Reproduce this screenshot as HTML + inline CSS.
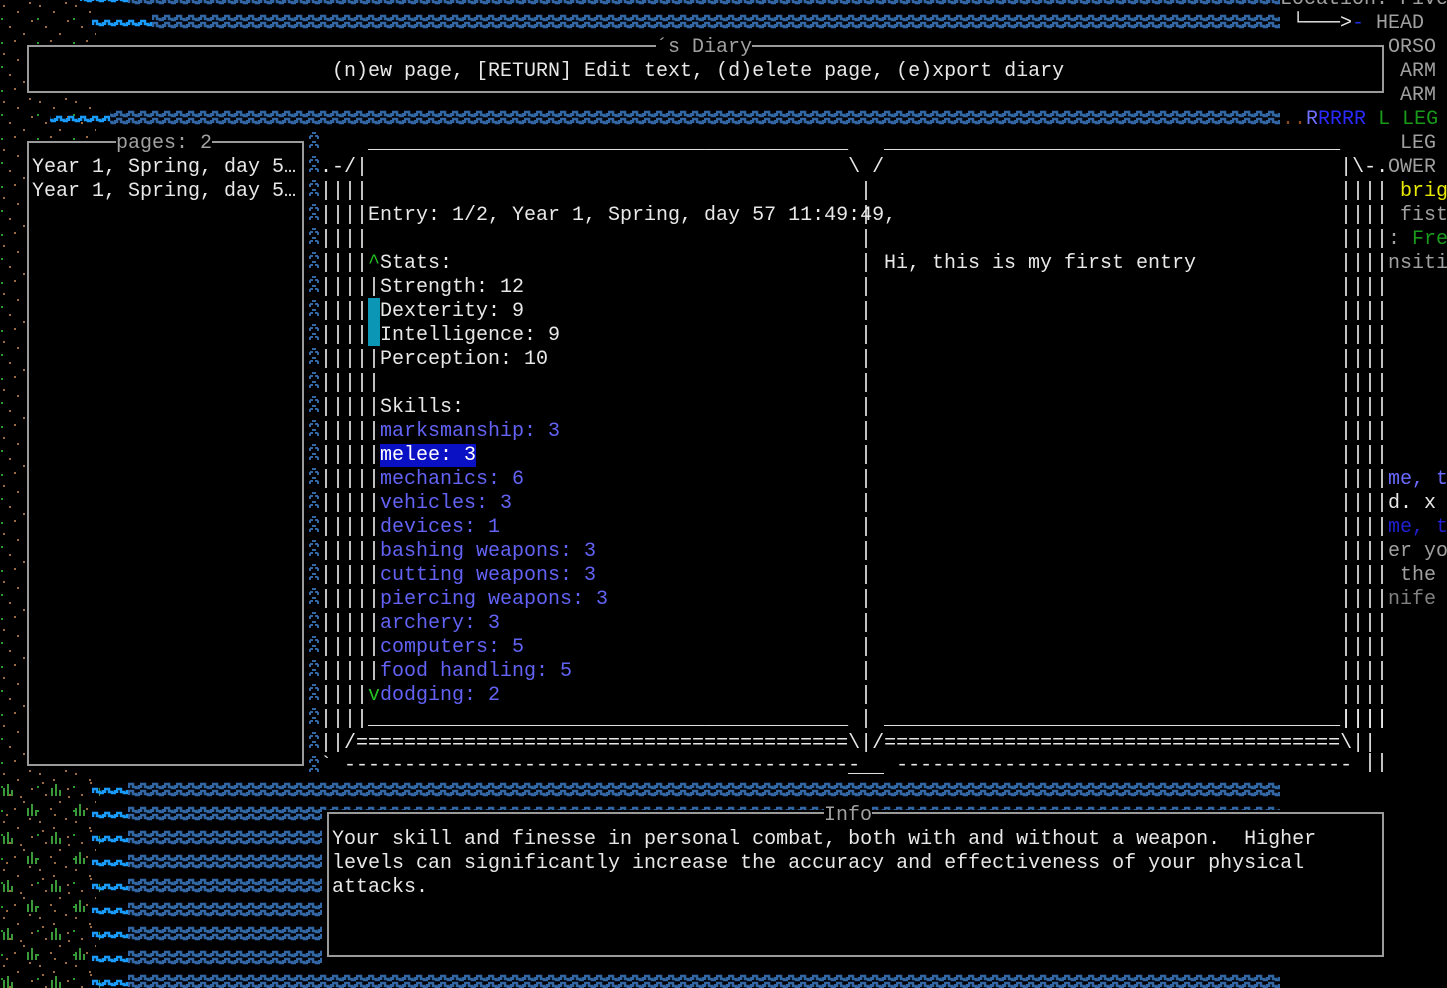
<!DOCTYPE html>
<html><head><meta charset="utf-8">
<style>
html,body{margin:0;padding:0;background:#000;width:1447px;height:988px;overflow:hidden;position:relative}
.t{position:absolute;white-space:pre;font:20px/24px "Liberation Mono","DejaVu Sans Mono",monospace;color:#e8e8e8;margin:2px 0 0 0}
.g{color:#a0a0a0}
.s{color:#6262f4}
.box{position:absolute;border:2px solid #9a9a9a;background:#000;box-sizing:border-box}
.bk{background:#000}
</style></head><body>
<svg width="1447" height="988" style="position:absolute;left:0;top:0">
<defs>
<pattern id="w" x="8" y="10" width="12" height="24" patternUnits="userSpaceOnUse">
<path d="M1 10V6h4v3h3v1h3V7M1 17v-4h4v3h3v1h3v-3" fill="none" stroke="#3366a4" stroke-width="2.5"/></pattern>
<pattern id="l" x="8" y="10" width="12" height="24" patternUnits="userSpaceOnUse">
<path d="M1 15v-4h4v3h3v1h3v-3" fill="none" stroke="#1a9cff" stroke-width="2.5"/></pattern>
<pattern id="c" x="308" y="10" width="12" height="24" patternUnits="userSpaceOnUse">
<path d="M4 3h4M2 6h3M7 6h3M2 6v3M10 6v3M4 12h4M2 15h3M7 15h3M2 15v3M10 15v3" fill="none" stroke="#3366a4" stroke-width="2"/></pattern>
<pattern id="d" x="0" y="0" width="36" height="48" patternUnits="userSpaceOnUse">
<rect x="3" y="5" width="2" height="2" fill="#9a6a40"/><rect x="17" y="11" width="2" height="2" fill="#9a6a40"/>
<rect x="29" y="2" width="2" height="2" fill="#9a6a40"/><rect x="9" y="26" width="2" height="2" fill="#9a6a40"/>
<rect x="23" y="33" width="2" height="2" fill="#9a6a40"/><rect x="1" y="42" width="2" height="2" fill="#2a9a2a"/>
<rect x="31" y="20" width="2" height="2" fill="#9a6a40"/><rect x="14" y="40" width="2" height="2" fill="#9a6a40"/>
<rect x="1" y="18" width="2" height="2" fill="#2a9a2a"/></pattern>
<pattern id="gr" x="0" y="10" width="48" height="48" patternUnits="userSpaceOnUse">
<path d="M4 10v8M8 6v12M12 12v6M28 30v8M32 26v12M36 32v6" stroke="#3a9a3a" stroke-width="2"/>
<rect x="20" y="18" width="2" height="2" fill="#9a6a40"/><rect x="42" y="4" width="2" height="2" fill="#9a6a40"/>
<rect x="6" y="36" width="2" height="2" fill="#9a6a40"/></pattern>
</defs>
<rect x="0" y="0" width="96" height="988" fill="url(#d)"/>
<rect x="0" y="778" width="100" height="210" fill="url(#gr)"/>
<rect x="128" y="-14" width="1152" height="24" fill="url(#w)"/>
<rect x="80" y="-14" width="48" height="24" fill="url(#l)"/>
<rect x="152" y="10" width="1128" height="24" fill="url(#w)"/>
<rect x="92" y="10" width="60" height="24" fill="url(#l)"/>
<rect x="110" y="106" width="1170" height="24" fill="url(#w)"/>
<rect x="50" y="106" width="60" height="24" fill="url(#l)"/>
<rect x="308" y="130" width="12" height="648" fill="url(#c)"/>
<rect x="128" y="778" width="1152" height="210" fill="url(#w)"/>
<rect x="92" y="778" width="36" height="210" fill="url(#l)"/>
</svg>

<!-- top box -->
<div class="box" style="left:27px;top:45px;width:1357px;height:48px"></div>
<div class="t g bk" style="left:656px;top:34px">´s Diary</div>
<div class="t" style="left:332px;top:58px">(n)ew page, [RETURN] Edit text, (d)elete page, (e)xport diary</div>

<!-- pages box -->
<div class="box" style="left:27px;top:141px;width:277px;height:625px"></div>
<div class="t g bk" style="left:116px;top:130px">pages: 2</div>
<div class="t" style="left:32px;top:154px">Year 1, Spring, day 5…
Year 1, Spring, day 5…</div>

<!-- book frame -->
<div class="t" style="left:320px;top:130px">    ________________________________________   ______________________________________
.-/|                                        \ /                                      |\-.</div>
<div class="t" style="left:320px;top:178px">||||
||||
||||
||||
||||
||||
||||
||||
||||
||||
||||
||||
||||
||||
||||
||||
||||
||||
||||
||||
||||
||||
||||________________________________________</div>
<div class="t" style="left:860px;top:178px">|
|
|
|
|
|
|
|
|
|
|
|
|
|
|
|
|
|
|
|
|
|
| ______________________________________||||</div>
<div class="t" style="left:1340px;top:178px">||||
||||
||||
||||
||||
||||
||||
||||
||||
||||
||||
||||
||||
||||
||||
||||
||||
||||
||||
||||
||||
||||
||||</div>
<div class="t" style="left:320px;top:730px">||/=========================================\|/======================================\||</div>
<div class="t" style="left:320px;top:752px">` -------------------------------------------   --------------------------------------</div>
<div class="t" style="left:1364px;top:750px">||</div>
<div class="t" style="left:848px;top:754px">___</div>

<!-- left page content -->
<div class="t" style="left:368px;top:202px">Entry: 1/2, Year 1, Spring, day 57 11:49:49,</div>
<div class="t" style="left:368px;top:250px;color:#22c022">^</div>
<div class="t" style="left:368px;top:274px">|
|
|
|
|
|
|
|
|
|
|
|
|
|
|
|
|</div>
<div style="position:absolute;left:368px;top:298px;width:12px;height:48px;background:#0a96b4"></div>
<div class="t" style="left:380px;top:250px">Stats:
Strength: 12
Dexterity: 9
Intelligence: 9
Perception: 10

Skills:</div>
<div class="t s" style="left:380px;top:418px">marksmanship: 3
<span style="background:#0a10c4;color:#fff">melee: 3</span>
mechanics: 6
vehicles: 3
devices: 1
bashing weapons: 3
cutting weapons: 3
piercing weapons: 3
archery: 3
computers: 5
food handling: 5
dodging: 2</div>
<div class="t" style="left:368px;top:682px;color:#22c022;background:#000">v</div>

<!-- right page -->
<div class="t" style="left:884px;top:250px">Hi, this is my first entry</div>

<!-- right side panel -->
<div class="t g" style="left:1280px;top:-14px">Location: Five</div>
<div class="t" style="left:1292px;top:10px">└───&gt;<span style="color:#2030e0">-</span> <span class="g">HEAD</span></div>
<div class="t g" style="left:1388px;top:34px">ORSO
 ARM
 ARM</div>
<div class="t" style="left:1282px;top:106px"><span style="color:#8a4a20">..</span><span style="color:#7070ff">R</span><span style="color:#2a2aff">RRRR</span> <span style="color:#1a9a1a">L LEG</span></div>
<div class="t g" style="left:1388px;top:130px"> LEG
OWER</div>
<div class="t" style="left:1388px;top:178px;color:#e8e800"> brig</div>
<div class="t g" style="left:1388px;top:202px"> fist
<span>:</span> <span style="color:#1a9a1a">Fre</span>
nsiti</div>
<div class="t" style="left:1388px;top:466px"><span style="color:#6a6aff">me, t</span>
d. x
<span style="color:#2020d0">me, t</span>
<span class="g">er yo</span>
<span class="g"> the</span>
<span style="color:#808080">nife</span></div>

<!-- info -->
<div class="bk" style="position:absolute;left:322px;top:810px;width:968px;height:156px"></div>
<div class="box" style="left:327px;top:812px;width:1057px;height:145px"></div>
<div class="t g bk" style="left:824px;top:802px">Info</div>
<div class="t" style="left:332px;top:826px">Your skill and finesse in personal combat, both with and without a weapon.  Higher
levels can significantly increase the accuracy and effectiveness of your physical
attacks.</div>
</body></html>
